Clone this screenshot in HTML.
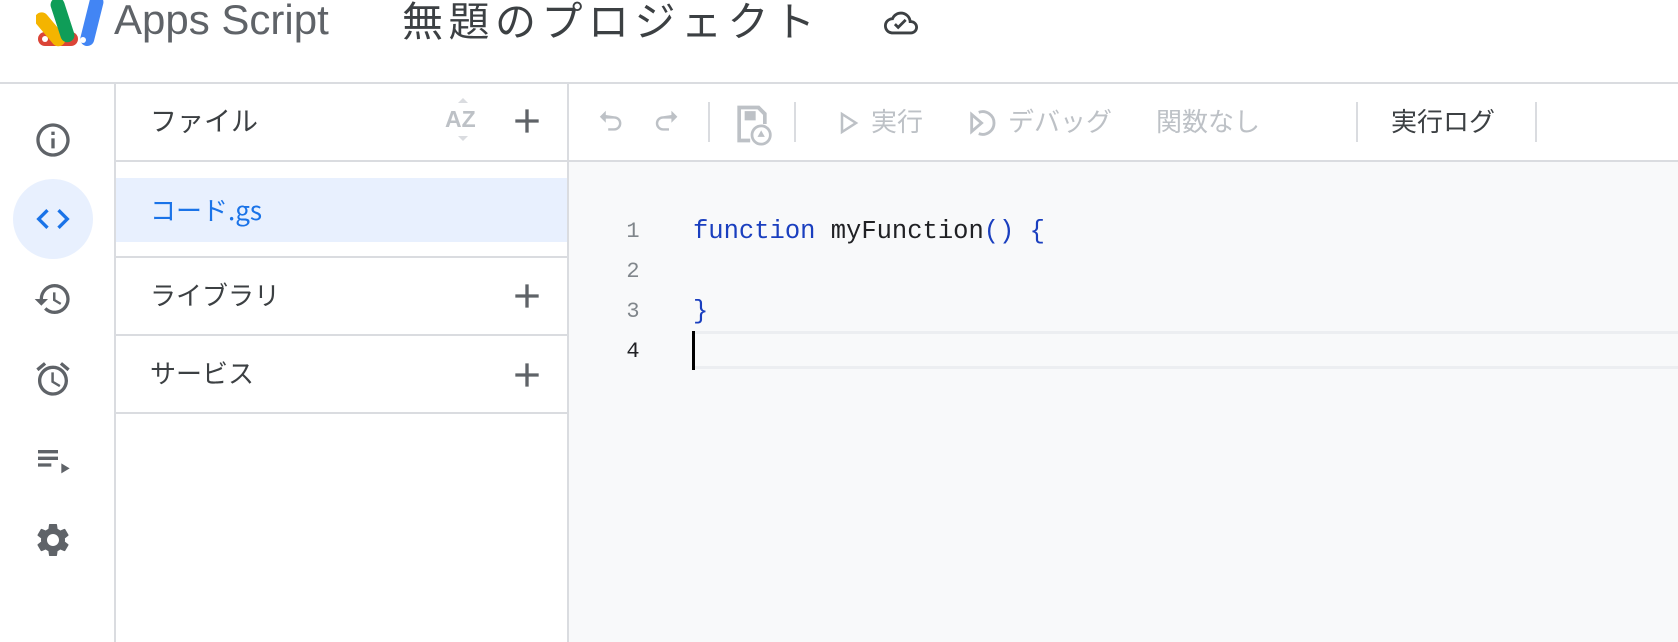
<!DOCTYPE html>
<html><head><meta charset="utf-8"><style>
*{margin:0;padding:0;box-sizing:border-box}
body{width:1678px;height:642px;overflow:hidden;background:#fff;font-family:"Liberation Sans","Noto Sans CJK JP",sans-serif;position:relative;color:#3c4043}
.a{position:absolute}
.hl{background:#dadce0}
.ic{position:absolute;fill:#5f6368}
.jp{font-family:"Noto Sans CJK JP",sans-serif}
.tb{position:absolute;top:101px;font-size:26px;color:#bdc1c6;font-family:"Noto Sans CJK JP",sans-serif;line-height:40px}
.num{position:absolute;left:624px;width:18px;text-align:center;font-family:"Liberation Mono",monospace;font-size:22px;color:#80868b}
.code{position:absolute;left:693px;font-family:"Liberation Mono",monospace;font-size:25.5px;color:#202124;white-space:pre}
</style></head><body>
<!-- logo -->
<svg class="a" style="left:36px;top:0" width="68" height="48" viewBox="0 0 68 48">
<rect x="2" y="32" width="40" height="14" rx="7" fill="#db4437"/>
<rect x="16" y="6" width="14" height="40" rx="7" fill="#f4b400" transform="rotate(-40 23 40)"/>
<rect x="26" y="-4" width="14" height="46" rx="7" fill="#0f9d58" transform="rotate(-18 33 40)"/>
<rect x="44" y="-6" width="14" height="52" rx="7" fill="#4285f4" transform="rotate(14 51 40)"/>
<circle cx="9" cy="39" r="3" fill="#fff"/><circle cx="47" cy="40" r="3" fill="#fff"/>
</svg>
<div class="a" style="left:114px;top:-5px;font-size:42px;color:#5f6368;line-height:50px">Apps Script</div>
<div class="a jp" style="left:402px;top:-9px;font-size:41px;letter-spacing:5.5px;color:#3c4043;line-height:54px">無題のプロジェクト</div>
<svg class="a" style="left:884px;top:6px" width="34" height="34" viewBox="0 0 24 24"><path fill="#3c4043" d="M19.35 10.04A7.490 7.490 0 0 0 12 4C9.110 4 6.600 5.640 5.350 8.040A5.994 5.994 0 0 0 0 14c0 3.310 2.690 6 6 6h13c2.760 0 5-2.240 5-5 0-2.640-2.050-4.780-4.650-4.960zM19 18H6c-2.210 0-4-1.790-4-4s1.790-4 4-4h.710C7.370 7.690 9.480 6 12 6c3.040 0 5.500 2.460 5.500 5.500v.500H19c1.660 0 3 1.340 3 3s-1.340 3-3 3zm-9-1.500l-3-3 1.400-1.400 1.600 1.600 4.600-4.600 1.400 1.400z"/></svg>
<div class="a hl" style="left:0;top:82px;width:1678px;height:2px"></div>
<!-- rail -->
<div class="a hl" style="left:114px;top:84px;width:2px;height:558px"></div>
<div class="a" style="left:13px;top:179px;width:80px;height:80px;border-radius:50%;background:#e8f0fe"></div>
<svg class="ic" style="left:33px;top:120px" width="40" height="40" viewBox="0 0 24 24"><path d="M11 7h2v2h-2zm0 4h2v6h-2zm1-9C6.480 2 2 6.480 2 12s4.480 10 10 10 10-4.480 10-10S17.520 2 12 2zm0 18c-4.410 0-8-3.590-8-8s3.590-8 8-8 8 3.590 8 8-3.590 8-8 8z"/></svg>
<svg class="ic" style="left:33px;top:199px;fill:#1a73e8" width="40" height="40" viewBox="0 0 24 24"><path d="M9.400 16.600L4.800 12l4.600-4.600L8 6l-6 6 6 6 1.400-1.400zm5.200 0l4.600-4.600-4.600-4.600L16 6l6 6-6 6-1.400-1.400z"/></svg>
<svg class="ic" style="left:33px;top:279px" width="40" height="40" viewBox="0 0 24 24"><path d="M13 3a9 9 0 0 0-9 9H1l3.890 3.890.070.140L9 12H6c0-3.870 3.130-7 7-7s7 3.130 7 7-3.130 7-7 7c-1.930 0-3.680-.790-4.940-2.060l-1.420 1.420A8.954 8.954 0 0 0 13 21a9 9 0 0 0 0-18zm-1 5v5l4.280 2.540.720-1.210-3.500-2.080V8H12z"/></svg>
<svg class="ic" style="left:33px;top:359px" width="40" height="40" viewBox="0 0 24 24"><path d="M22 5.720l-4.600-3.860-1.290 1.530 4.600 3.860L22 5.720zM7.880 3.390L6.600 1.860 2 5.710l1.290 1.530 4.590-3.850zM12.500 8H11v6l4.750 2.850.750-1.230-4-2.370V8zM12 4c-4.970 0-9 4.030-9 9s4.020 9 9 9a9 9 0 0 0 0-18zm0 16c-3.870 0-7-3.130-7-7s3.130-7 7-7 7 3.130 7 7-3.130 7-7 7z"/></svg>
<svg class="ic" style="left:33px;top:440px" width="40" height="40" viewBox="0 0 24 24"><path d="M3 6h12v2H3zm0 4h12v2H3zm0 4h8v2H3zm14 0v6l5-3z"/></svg>
<svg class="ic" style="left:33px;top:520px" width="40" height="40" viewBox="0 0 24 24"><path d="M19.140 12.940c.040-.300.060-.610.060-.940 0-.320-.020-.640-.070-.940l2.030-1.580a.490.490 0 0 0 .120-.610l-1.920-3.320a.488.488 0 0 0-.590-.220l-2.390.960c-.500-.380-1.030-.700-1.620-.940l-.360-2.540a.484.484 0 0 0-.480-.410h-3.840c-.240 0-.430.170-.470.410l-.360 2.540c-.590.240-1.130.570-1.620.940l-2.390-.960c-.220-.080-.470 0-.590.220L2.740 8.870c-.120.210-.080.470.120.610l2.030 1.580c-.050.300-.090.630-.090.940s.020.640.070.940l-2.030 1.580a.490.490 0 0 0-.120.610l1.920 3.320c.120.220.370.290.590.220l2.390-.960c.500.380 1.030.700 1.620.940l.360 2.540c.050.240.240.410.480.410h3.840c.240 0 .440-.170.470-.410l.360-2.540c.590-.240 1.130-.560 1.620-.940l2.390.960c.220.080.470 0 .590-.220l1.920-3.320c.120-.220.070-.470-.120-.610l-2.010-1.580zM12 15.600c-1.980 0-3.600-1.620-3.600-3.600s1.620-3.600 3.600-3.600 3.600 1.620 3.600 3.600-1.620 3.600-3.600 3.600z"/></svg>
<!-- file panel -->
<div class="a hl" style="left:567px;top:84px;width:2px;height:558px"></div>
<div class="a jp" style="left:150px;top:100px;font-size:27px;line-height:40px;color:#3c4043">ファイル</div>
<div class="a" style="left:445px;top:106px;font-size:23px;font-weight:bold;color:#bdc1c6">AZ</div>
<div class="a" style="left:458px;top:98px;width:0;height:0;border:5px solid transparent;border-bottom-color:#dadce0;border-top:0"></div>
<div class="a" style="left:458px;top:136px;width:0;height:0;border:5px solid transparent;border-top-color:#dadce0;border-bottom:0"></div>
<svg class="ic" style="left:507px;top:101px" width="40" height="40" viewBox="0 0 24 24"><path d="M19 13h-6v6h-2v-6H5v-2h6V5h2v6h6z"/></svg>
<div class="a hl" style="left:116px;top:160px;width:451px;height:2px"></div>
<div class="a" style="left:116px;top:178px;width:451px;height:64px;background:#e8f0fe"></div>
<div class="a jp" style="left:150px;top:190px;font-size:26px;line-height:40px;color:#1a73e8">コード.gs</div>
<div class="a hl" style="left:116px;top:256px;width:451px;height:2px"></div>
<div class="a jp" style="left:150px;top:275px;font-size:26px;line-height:40px">ライブラリ</div>
<svg class="ic" style="left:507px;top:276px" width="40" height="40" viewBox="0 0 24 24"><path d="M19 13h-6v6h-2v-6H5v-2h6V5h2v6h6z"/></svg>
<div class="a hl" style="left:116px;top:334px;width:451px;height:2px"></div>
<div class="a jp" style="left:150px;top:353px;font-size:26px;line-height:40px">サービス</div>
<svg class="ic" style="left:507px;top:355px" width="40" height="40" viewBox="0 0 24 24"><path d="M19 13h-6v6h-2v-6H5v-2h6V5h2v6h6z"/></svg>
<div class="a hl" style="left:116px;top:412px;width:451px;height:2px"></div>
<!-- toolbar -->
<div class="a hl" style="left:569px;top:160px;width:1109px;height:2px"></div>
<svg class="ic" style="left:595px;top:106px;fill:#bdc1c6" width="32" height="32" viewBox="0 0 24 24"><path d="M7 7.500V4L2 9l5 5v-3.500h7a4 4 0 0 1 0 8H9v2h5a6 6 0 0 0 0-12z" transform="scale(.9) translate(2 0)"/></svg>
<svg class="ic" style="left:651px;top:106px;fill:#bdc1c6" width="32" height="32" viewBox="0 0 24 24"><path d="M17 7.500V4l5 5-5 5v-3.500h-7a4 4 0 0 0 0 8h5v2h-5a6 6 0 0 1 0-12z" transform="scale(.9)"/></svg>
<div class="a hl" style="left:708px;top:102px;width:2px;height:40px"></div>
<svg class="ic" style="left:730px;top:102px;fill:#bdc1c6" width="44" height="44" viewBox="0 0 24 24"><path d="M4 2h12l4 4v6h-2V7l-3-3H6v16h5v2H4z M8 5h6v5H8z"/><circle cx="17" cy="18" r="5" fill="none" stroke="#bdc1c6" stroke-width="1.5"/><path d="M17 15.500l2 3.500h-4z" fill="#bdc1c6"/></svg>
<div class="a hl" style="left:794px;top:102px;width:2px;height:40px"></div>
<svg class="ic" style="left:838px;top:111px" width="22" height="24" viewBox="0 0 22 24"><path d="M4 3l14 9-14 9z" fill="none" stroke="#bdc1c6" stroke-width="2.5"/></svg>
<div class="tb" style="left:871px">実行</div>
<svg class="ic" style="left:966px;top:106px" width="34" height="34" viewBox="0 0 24 24"><path d="M4 6l7 6-7 6z" fill="none" stroke="#bdc1c6" stroke-width="2"/><path d="M9 4.500A8 8 0 1 1 9 19.500" fill="none" stroke="#bdc1c6" stroke-width="2"/></svg>
<div class="tb" style="left:1008px">デバッグ</div>
<div class="tb" style="left:1156px">関数なし</div>
<div class="a hl" style="left:1356px;top:102px;width:2px;height:40px"></div>
<div class="tb" style="left:1391px;color:#3c4043">実行ログ</div>
<div class="a hl" style="left:1535px;top:102px;width:2px;height:40px"></div>
<!-- editor -->
<div class="a" style="left:569px;top:162px;width:1109px;height:480px;background:#f8f9fa"></div>
<div class="a" style="left:693px;top:331px;width:985px;height:38px;border-top:3px solid #eceef1;border-bottom:3px solid #eceef1"></div>
<div class="num" style="top:219px">1</div>
<div class="num" style="top:259px">2</div>
<div class="num" style="top:299px">3</div>
<div class="num" style="top:339px;color:#202124">4</div>
<div class="code" style="top:217px"><span style="color:#1a3fbf">function</span> myFunction<span style="color:#1a3fbf">() {</span></div>
<div class="code" style="top:297px;color:#1a3fbf">}</div>
<div class="a" style="left:692px;top:331px;width:3px;height:39px;background:#000"></div>
</body></html>
